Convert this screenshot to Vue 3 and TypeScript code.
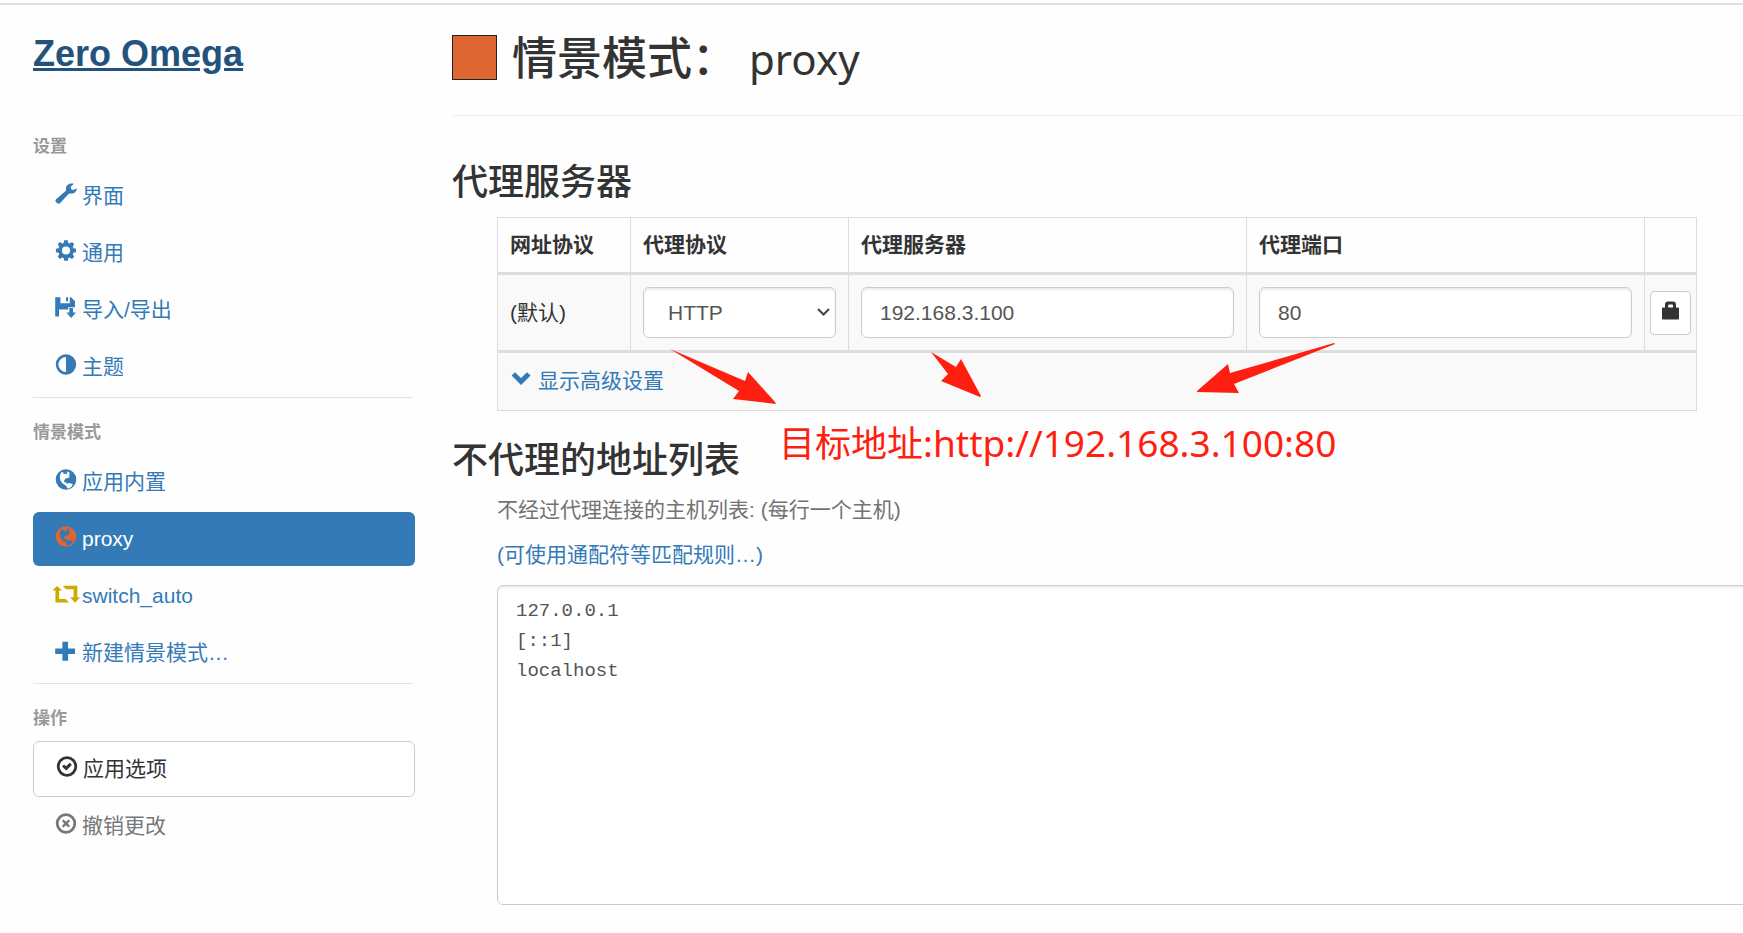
<script setup lang="ts">
import { ref } from 'vue'

interface NavItem {
  id: string
  label: string
  icon: string
  tone?: string
}

interface NavGroup {
  title: string
  items: NavItem[]
}

const groups: NavGroup[] = [
  {
    title: '设置',
    items: [
      { id: 'ui', label: '界面', icon: 'wrench' },
      { id: 'general', label: '通用', icon: 'cog' },
      { id: 'io', label: '导入/导出', icon: 'save' },
      { id: 'theme', label: '主题', icon: 'adjust' },
    ],
  },
  {
    title: '情景模式',
    items: [
      { id: 'builtin', label: '应用内置', icon: 'globe' },
      { id: 'proxy', label: 'proxy', icon: 'globe', tone: 'orange' },
      { id: 'switch_auto', label: 'switch_auto', icon: 'retweet', tone: 'gold' },
      { id: 'new', label: '新建情景模式…', icon: 'plus' },
    ],
  },
]

const icons: Record<string, string> = {
  wrench:
    'M19 .8 15.6 3.8 16.2 6.3 18.4 7 21.8 5.2C21.8 8.6 19.2 11 15.6 10.5 14.7 10.3 14.1 10.5 13.5 11.1L5 20.2C3.4 21.8 -.6 19 .8 16.6L10.3 8.2C11 7.5 11.2 6.8 11 5.9 10.8 2 14.5-.6 19 .8Z',
  cog:
    'M9.2 .3H12.8L13.3 3 14.7 3.6 17 2.1 19.2 4.3 17.8 6.7 18.4 8.3 21 8.8V12.2L18.4 12.8 17.8 14.3 19.2 16.7 17 18.9 14.7 17.4 13.3 18 12.8 20.7H9.2L8.7 18 7.1 17.4 5 18.9 2.8 16.7 4.2 14.3 3.6 12.8.9 12.2V8.8L3.6 8.3 4.2 6.7 2.8 4.3 5 2.1 7.1 3.6 8.7 3ZM11 6.4A4.1 4.1 0 1 0 11 14.6 4.1 4.1 0 1 0 11 6.4Z',
  save:
    'M.2 .2H5.4V6.2H14.8V.2H16L20 4.2V10.3H13.2V12.6H4V19.5H.2ZM11 .2H13V4.2H11ZM14.4 11H18V15.6H21L16.2 21 11.4 15.6H14.4Z',
  adjust:
    'M11 .3A10.2 10.2 0 1 0 11 20.7 10.2 10.2 0 1 0 11 .3ZM11 2.9V18.1A7.6 7.6 0 0 1 11 2.9Z',
  globe:
    'M11 .2A10.3 10.3 0 1 0 11 20.8 10.3 10.3 0 1 0 11 .2ZM6.6 3 8.4 3.4 8.8 5.2 10.4 4.6 11.4 5.4 12.4 4.2 11.6 2.8 14 2.8 14.8 5 13.8 7 15 8 12.8 9 10.6 9.6 9 11.8 9.4 13.2 11 13.2 11.6 14.8 14.4 14 17.8 15 17 17.2 14 19.4 12.2 19.2 11.4 17 8 14.8 5.4 11.6 4.8 8.2 5.4 5Z',
  retweet:
    'M2.1 2.9 7 7.5H4.1V15.9H10.6L14 19.4H.4V7.5H-2.7ZM7.7 2.7H22.3V14.2H25L20.2 19.7 15 14.2H18.6V6.2H11Z',
  plus:
    'M7.4 1.7H13.1V8.6H20V14H13.1V20.7H7.4V14H.2V8.6H7.4Z',
  ok:
    'M11 .3A10.2 10.2 0 1 0 11 20.7 10.2 10.2 0 1 0 11 .3ZM11 3.1A7.4 7.4 0 1 1 11 17.9 7.4 7.4 0 1 1 11 3.1ZM6.1 10.4 7.9 8.6 10.1 10.2 13.7 6.8 15.9 9 10.2 14.6Z',
  remove:
    'M11 .3A10.2 10.2 0 1 0 11 20.7 10.2 10.2 0 1 0 11 .3ZM11 3.1A7.4 7.4 0 1 1 11 17.9 7.4 7.4 0 1 1 11 3.1ZM8.5 6.4 11 8.8 13.5 6.4 15.1 8 12.7 10.5 15.1 13 13.5 14.6 11 12.2 8.5 14.6 6.9 13 9.3 10.5 6.9 8Z',
  chevron:
    'M.6 7.6 4 4.2 10 10 16 4.2 19.6 7.6 10 17Z',
  lock:
    'M3 7.6V4.6Q3 1.6 6 1.6H11Q14 1.6 14 4.6V7.6H16Q17 7.6 17 8.6V18.6Q17 19.6 16 19.6H1Q0 19.6 0 18.6V8.6Q0 7.6 1 7.6ZM6.2 7.6H11V5.4Q11 4.4 10 4.4H7.2Q6.2 4.4 6.2 5.4Z',
}

const active = ref('proxy')
const color = ref('#dd6633')
const scheme = ref('HTTP')
const host = ref('192.168.3.100')
const port = ref('80')
const bypass = ref('127.0.0.1\n[::1]\nlocalhost')
</script>

<template>
  <div class="page">
    <aside class="sidebar">
      <h1 class="brand"><a href="#">Zero Omega</a></h1>
      <nav>
        <section v-for="group in groups" :key="group.title" class="group">
          <h2 class="group-title">{{ group.title }}</h2>
          <ul class="list">
            <li v-for="item in group.items" :key="item.id">
              <a
                href="#"
                class="item"
                :class="{ active: item.id === active }"
                @click.prevent="active = item.id"
              >
                <svg class="icon" :class="item.tone" viewBox="0 0 21 21" aria-hidden="true">
                  <path :d="icons[item.icon]" fill-rule="evenodd" />
                </svg>
                <span>{{ item.label }}</span>
              </a>
            </li>
          </ul>
        </section>
        <section class="group">
          <h2 class="group-title">操作</h2>
          <button type="button" class="item apply">
            <svg class="icon" viewBox="0 0 21 21" aria-hidden="true">
              <path :d="icons.ok" fill-rule="evenodd" />
            </svg>
            <span>应用选项</span>
          </button>
          <button type="button" class="item revert">
            <svg class="icon" viewBox="0 0 21 21" aria-hidden="true">
              <path :d="icons.remove" fill-rule="evenodd" />
            </svg>
            <span>撤销更改</span>
          </button>
        </section>
      </nav>
    </aside>

    <main class="main">
      <header class="header">
        <input v-model="color" class="swatch" type="color" aria-label="颜色" />
        <h2 class="title">情景模式：<span class="name">proxy</span></h2>
      </header>

      <section class="section servers">
        <h3 class="heading">代理服务器</h3>
        <div class="indent table-area">
          <table class="table">
            <colgroup>
              <col class="col-url" />
              <col class="col-scheme" />
              <col class="col-wide" />
              <col class="col-wide" />
              <col class="col-auth" />
            </colgroup>
            <thead>
              <tr>
                <th scope="col">网址协议</th>
                <th scope="col">代理协议</th>
                <th scope="col">代理服务器</th>
                <th scope="col">代理端口</th>
                <td></td>
              </tr>
            </thead>
            <tbody>
              <tr>
                <td>(默认)</td>
                <td>
                  <div class="select">
                    <select v-model="scheme" class="control" aria-label="代理协议">
                      <option>HTTP</option>
                      <option>HTTPS</option>
                      <option>SOCKS4</option>
                      <option>SOCKS5</option>
                    </select>
                    <svg class="caret" viewBox="0 0 13 8" aria-hidden="true">
                      <path d="M1 1 6.5 6.5 12 1" />
                    </svg>
                  </div>
                </td>
                <td><input v-model="host" class="control" type="text" aria-label="代理服务器" /></td>
                <td><input v-model="port" class="control" type="text" aria-label="代理端口" /></td>
                <td class="auth">
                  <button type="button" class="lock" aria-label="代理登录">
                    <svg viewBox="0 0 17 21" aria-hidden="true">
                      <path :d="icons.lock" fill-rule="evenodd" />
                    </svg>
                  </button>
                </td>
              </tr>
            </tbody>
            <tfoot>
              <tr>
                <td colspan="5">
                  <a href="#" class="advanced">
                    <svg class="icon" viewBox="0 0 21 21" aria-hidden="true">
                      <path :d="icons.chevron" />
                    </svg>
                    <span>显示高级设置</span>
                  </a>
                </td>
              </tr>
            </tfoot>
          </table>

          <svg class="arrows" viewBox="0 0 1200 194" aria-hidden="true">
            <path d="M173 132 248 164 251 155 278 185 279 187 236 182 242 174Z" />
            <path d="M434 135 459 150 464 142 484 179 483 180 444 164 451 157Z" />
            <path d="M700 174 731 147 733 156 837 126 838 127 737 167 742 176 700 175Z" />
          </svg>
          <p class="note">目标地址<span class="url">:http://192.168.3.100:80</span></p>
        </div>
      </section>

      <section class="section bypass">
        <h3 class="heading">不代理的地址列表</h3>
        <div class="indent">
          <label class="help" for="bypass">不经过代理连接的主机列表: (每行一个主机)</label>
          <p class="rules"><a href="#">(可使用通配符等匹配规则…)</a></p>
          <textarea id="bypass" v-model="bypass" class="control area" rows="10" spellcheck="false"></textarea>
        </div>
      </section>
    </main>
  </div>
</template>

<style>
body {
  margin: 0;
  background: #fefefe;
  overflow: hidden;
}
</style>

<style scoped>
.page,
.page * {
  box-sizing: border-box;
}

.page {
  display: flex;
  gap: 37px;
  margin-top: 3px;
  padding-left: 33px;
  border-top: 2px solid #dfdfdf;
  color: #333;
  font: 21px/30px "Liberation Sans", "Noto Sans CJK SC", sans-serif;
  overflow: hidden;
}

a {
  color: #337ab7;
  text-decoration: none;
}

h1,
h2,
h3,
p,
ul {
  margin: 0;
  padding: 0;
}

.sidebar {
  flex: 0 0 382px;
}

.brand {
  margin: 29px 0 38px;
  font-size: 36px;
  line-height: 40px;
}

.brand a {
  color: #23527c;
  text-decoration: underline;
  text-decoration-thickness: 3px;
}

.group + .group {
  margin-top: 3px;
}

.group + .group::before {
  content: "";
  display: block;
  width: 380px;
  border-top: 1px solid #e3e3e3;
}

.group-title {
  padding: 23px 0 10px;
  color: #999;
  font-size: 17px;
  line-height: 24px;
}

.list {
  display: grid;
  gap: 3px;
  list-style: none;
}

.item {
  display: flex;
  gap: 6px;
  width: 100%;
  padding: 12px 22px;
  border: 0;
  border-radius: 6px;
  background: none;
  font: inherit;
  text-align: left;
}

.item.active {
  background: #337ab7;
  color: #fff;
}

.apply {
  margin-bottom: 2px;
  border: 1px solid #ccc;
  background: #fff;
  color: #333;
}

.revert {
  color: #777;
}

.icon {
  flex: none;
  width: 21px;
  height: 21px;
  margin-top: 2px;
  fill: currentColor;
  overflow: visible;
}

.orange {
  color: #dd6633;
}

.gold {
  color: #ccaa00;
}

.main {
  flex: 1;
  min-width: 0;
}

.header {
  display: flex;
  align-items: flex-start;
  gap: 15px;
  padding: 30px 0;
  border-bottom: 1px solid #eee;
}

.swatch {
  width: 45px;
  height: 45px;
  padding: 0;
  border: 1px solid #222;
  background: none;
  appearance: none;
}

.swatch::-webkit-color-swatch-wrapper {
  padding: 0;
}

.swatch::-webkit-color-swatch {
  border: 0;
  border-radius: 0;
}

.title {
  font-size: 45px;
  font-weight: 500;
  line-height: 50px;
}

.name {
  margin-left: 12px;
  font-family: "Noto Sans", sans-serif;
  font-size: 42px;
  font-weight: 400;
  line-height: 40px;
}

.servers {
  margin-top: 47px;
}

.bypass {
  margin-top: 30px;
}

.heading {
  margin-bottom: 14px;
  font-size: 36px;
  font-weight: 500;
  line-height: 40px;
}

.indent {
  margin-left: 45px;
}

.table-area {
  position: relative;
  max-width: 1200px;
}

.table {
  width: 100%;
  border-collapse: collapse;
  table-layout: fixed;
}

.col-url {
  width: 133px;
}

.col-scheme {
  width: 218px;
}

.col-auth {
  width: 52px;
}

th,
td {
  padding: 12px;
  border: 1px solid #ddd;
  text-align: left;
  vertical-align: middle;
}

thead th,
thead td {
  border-bottom: 3px solid #ddd;
}

tbody td,
tfoot td {
  background: #f9f9f9;
}

tfoot td {
  padding: 13px 12px 14px;
  border-top: 3px solid #ddd;
}

.auth {
  padding: 0;
  text-align: center;
}

.control {
  display: block;
  width: 100%;
  height: 51px;
  padding: 9px 18px;
  border: 1px solid #ccc;
  border-radius: 6px;
  outline: 0;
  background: #fff;
  box-shadow: inset 0 2px 2px rgba(0, 0, 0, 0.075);
  color: #555;
  font: inherit;
}

.select {
  position: relative;
}

.select .control {
  padding-left: 24px;
  appearance: none;
}

.caret {
  position: absolute;
  top: 21px;
  right: 6px;
  width: 13px;
  height: 8px;
  fill: none;
  stroke: #444;
  stroke-width: 2;
  pointer-events: none;
}

.lock {
  display: inline-flex;
  align-items: flex-start;
  justify-content: center;
  width: 41px;
  height: 44px;
  padding: 8px 0;
  border: 1px solid #ccc;
  border-radius: 4px;
  background: #fff;
  vertical-align: middle;
}

.lock svg {
  width: 17px;
  height: 21px;
  fill: #333;
}

.advanced {
  display: flex;
  gap: 6px;
  margin-left: 1px;
}

.arrows {
  position: absolute;
  top: 0;
  left: 0;
  width: 1200px;
  height: 194px;
  fill: #ff1f10;
  pointer-events: none;
}

.note {
  position: absolute;
  top: 202px;
  left: 282px;
  color: #ff1f10;
  font: 36px/48px "Noto Sans", "Noto Sans CJK SC", sans-serif;
  white-space: nowrap;
}

.url {
  font-size: 37px;
}

.help {
  display: block;
  color: #737373;
}

.rules {
  margin: 15px 0;
}

.area {
  width: calc(100% + 20px);
  height: auto;
  padding-top: 10px;
  padding-bottom: 8px;
  font: 19px/30px "Liberation Mono", monospace;
  resize: none;
}
</style>
